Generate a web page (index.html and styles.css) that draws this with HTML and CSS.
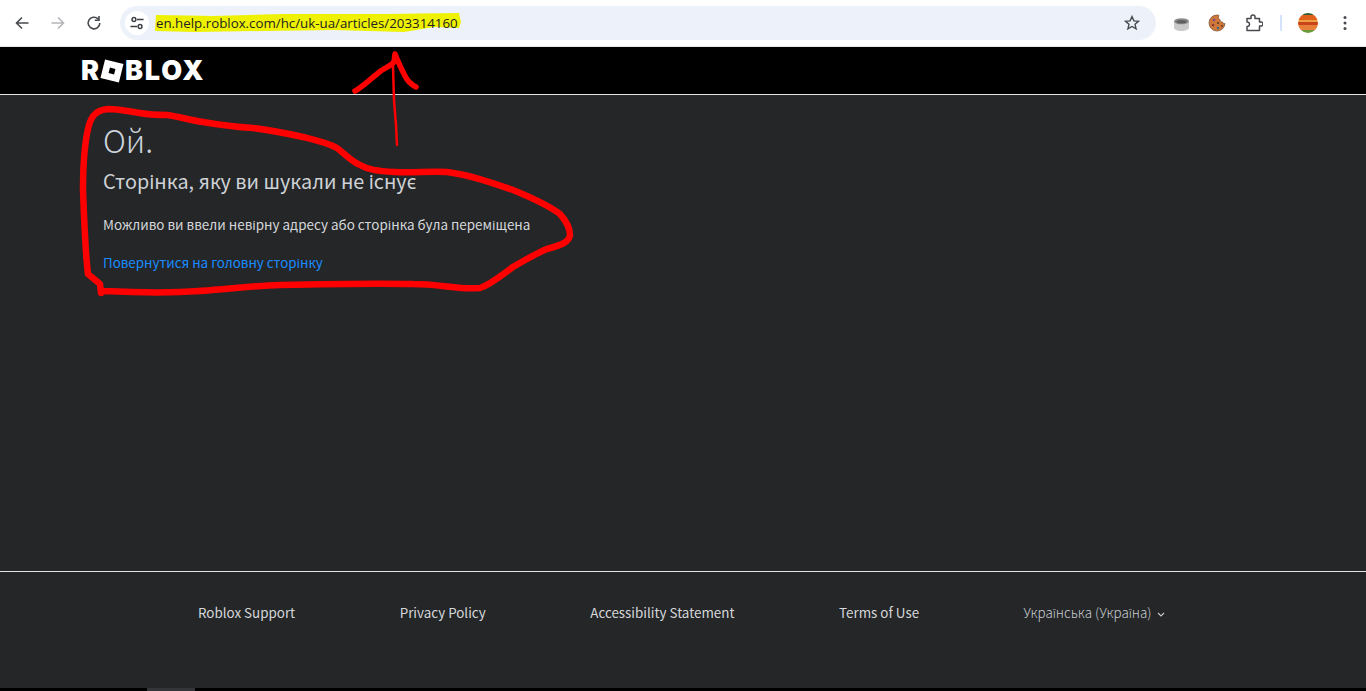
FILE: index.html
```html
<!DOCTYPE html>
<html lang="uk">
<head>
<meta charset="utf-8">
<title>Roblox</title>
<link rel="stylesheet" href="styles.css">
</head>
<body>
<div class="toolbar">
  <div class="nav">
    <svg class="tool-icon" viewBox="0 0 16 16"><path d="M14.500 8H2.500M8 2.500L2.500 8l5.500 5.500" fill="none" stroke="#474a4f" stroke-width="1.600"/></svg>
    <svg class="tool-icon" viewBox="0 0 16 16"><path d="M1.500 8h12M8 2.500L13.500 8 8 13.500" fill="none" stroke="#b4b6b9" stroke-width="1.600"/></svg>
    <svg class="tool-icon" viewBox="0 0 16 16"><path d="M13.800 8A5.800 5.800 0 1 1 12 3.800M13 1v4.200H8.800" fill="none" stroke="#474a4f" stroke-width="1.600"/></svg>
  </div>
  <div class="omnibox">
    <span class="site-chip">
      <svg class="chip-icon" viewBox="0 0 16 16"><circle cx="4.500" cy="4" r="2.200" fill="none" stroke="#3c3f44" stroke-width="1.700"/><path d="M8 4h7.500M.5 12H8" stroke="#3c3f44" stroke-width="1.700"/><circle cx="11.500" cy="12" r="2.200" fill="none" stroke="#3c3f44" stroke-width="1.700"/></svg>
    </span>
    <span class="url"><svg class="marker" viewBox="0 0 308 20" preserveAspectRatio="none"><path d="M2 2L60 3L130 1L230 1L305 0L307 9L305 15L280 14L250 19L180 17L110 18L40 19L1 18Z" fill="#eef200"/></svg><span class="url-text">en.help.roblox.com/hc/uk-ua/articles/203314160</span></span>
    <svg class="star" viewBox="0 0 16 16"><path d="M8 1.600l1.900 4.300 4.600.4-3.500 3 1.100 4.600L8 11.500l-4.100 2.400L5 9.300l-3.500-3 4.600-.4z" fill="none" stroke="#474a4f" stroke-width="1.400"/></svg>
  </div>
  <div class="extensions">
    <svg class="ext ext-cup" viewBox="0 0 18 14"><path d="M1 3.500v7c0 2 3.500 3.500 8 3.500s8-1.500 8-3.500v-7z" fill="#c9c9c9"/><ellipse cx="9" cy="3.500" rx="8" ry="3.300" fill="#8b8b8b"/><ellipse cx="9" cy="4" rx="5.500" ry="1.800" fill="#5f5f5f"/></svg>
    <svg class="ext ext-cookie" viewBox="0 0 18 18"><path d="M9 1a8 8 0 1 0 8 8.500c-1.200.5-2.300-.3-2.400-1.400-1.400.2-2.500-.9-2.400-2.300C10.800 5.800 9.800 3.200 11 1.500 10.400 1.200 9.700 1 9 1z" fill="#d0783a" stroke="#6e4a2c" stroke-width=".7"/><circle cx="6" cy="6" r="1.300" fill="#7a4a8c"/><circle cx="5" cy="11" r="1.300" fill="#8c3a3a"/><circle cx="10" cy="9" r="1.100" fill="#5a3a2a"/><circle cx="10" cy="14" r="1.200" fill="#3a6a8c"/><circle cx="14" cy="12" r="1" fill="#5a3a2a"/></svg>
    <svg class="ext ext-puzzle" viewBox="0 0 18 18"><path d="M2 4.500h4V3a2 2 0 0 1 4 0v1.500h4.500V8H16a2 2 0 0 1 0 4h-1.500v4.500H2V12.500c2 0 2.500-1 2.500-2.300S3.500 8 2 8z" fill="none" stroke="#474a4f" stroke-width="1.500" stroke-linejoin="round"/></svg>
    <span class="divider"></span>
    <span class="avatar"></span>
    <svg class="menu" viewBox="0 0 4 16"><circle cx="2" cy="2.500" r="1.500" fill="#474a4f"/><circle cx="2" cy="8" r="1.500" fill="#474a4f"/><circle cx="2" cy="13.500" r="1.500" fill="#474a4f"/></svg>
  </div>
</div>

<header class="site-header">
  <div class="logo"><span>R</span><span class="logo-o"></span><span>BLOX</span></div>
</header>

<main class="content">
  <h1 class="oops">Ой.</h1>
  <h2 class="subtitle">Сторінка, яку ви шукали не існує</h2>
  <p class="message">Можливо ви ввели невірну адресу або сторінка була переміщена</p>
  <a class="home-link" href="#">Повернутися на головну сторінку</a>
</main>

<footer class="site-footer">
  <a class="foot-link" href="#">Roblox Support</a>
  <a class="foot-link" href="#">Privacy Policy</a>
  <a class="foot-link" href="#">Accessibility Statement</a>
  <a class="foot-link" href="#">Terms of Use</a>
  <span class="language">Українська (Україна)<svg class="caret" viewBox="0 0 8 5"><path d="M1 1l3 3 3-3" fill="none" stroke="#c8ccd0" stroke-width="1.100"/></svg></span>
</footer>

<div class="taskbar"><span class="taskbar-tab"></span></div>

<svg class="ink" viewBox="0 0 1366 691">
  <path class="ink-wide" d="M101 293L100 284L88 274C85 250 84 215 83 190C83 165 85 140 89 125C92 115 97 110 108 109C120 109 130 112 140 113C150 115 158 115 167 115C180 117 190 120 203 122C220 125 235 127 253 128C270 130 285 133 303 137C315 140 328 143 337 148C346 155 350 160 358 164C368 170 378 171 395 172C412 173 430 171 447 172C470 175 490 182 513 190C530 197 548 205 560 214C567 222 570 228 570 235C569 242 562 245 547 249C535 254 525 260 513 267C503 274 492 284 480 288C460 290 440 284 413 284C370 283 325 284 280 285C245 286 215 291 180 292C155 293 125 292 103 291"/>
  <path class="ink-thin" d="M397 145L396 125L394 100L393 66"/>
  <path class="ink-head" d="M355 91C362 87 367 82 377 74C383 68 390 67 394 62L395 54C398 62 401 68 405 76C408 82 412 85 416 87"/>
</svg>
</body>
</html>
```
FILE: styles.css
```css
* { box-sizing: border-box; }
html, body { margin: 0; height: 691px; overflow: hidden; }
body {
  position: relative;
  display: flex;
  flex-direction: column;
  background: #242628;
  font-family: "Noto Sans CJK SC", "Noto Sans", sans-serif;
  color: #d5d7da;
}
.toolbar {
  height: 47px;
  flex: none;
  background: #fff;
  border-bottom: 1px solid #e4e6e9;
  display: flex;
  align-items: center;
  padding: 0 0 1px 6px;
}
.nav { display: flex; gap: 20px; width: 114px; padding-left: 8px; }
.tool-icon { width: 16px; height: 16px; }
.omnibox {
  width: 1036px;
  height: 34px;
  background: #edf2fa;
  border-radius: 17px;
  display: flex;
  align-items: center;
  padding: 0 16px 0 5px;
}
.site-chip {
  width: 24px;
  height: 24px;
  border-radius: 50%;
  background: #fff;
  display: flex;
  align-items: center;
  justify-content: center;
  margin-right: 7px;
}
.chip-icon { width: 14px; height: 14px; }
.url { position: relative; font-family: "Open Sans", sans-serif; font-size: 13.300px; color: #1f2124; }
.marker { position: absolute; left: -2px; top: -1px; width: 308px; height: 20px; }
.url-text { position: relative; }
.star { width: 16px; height: 16px; margin-left: auto; }
.extensions { display: flex; align-items: center; flex: 1; padding-left: 17px; }
.ext-cup { width: 17px; height: 13px; margin-top: 4px; }
.ext-cookie { width: 18px; height: 18px; margin-left: 18px; }
.ext-puzzle { width: 18px; height: 18px; margin-left: 19px; }
.divider { width: 2px; height: 16px; background: #d3e3fd; margin-left: 17px; }
.avatar {
  width: 20px;
  height: 20px;
  border-radius: 50%;
  margin-left: 16px;
  background: linear-gradient(#2c5a2c 0 10%, #e0601c 10% 36%, #f0a040 36% 44%, #c8441c 44% 60%, #e8803a 60% 84%, #6a9a3a 84%);
}
.menu { width: 4px; height: 16px; margin-left: 25px; }

.site-header {
  height: 48px;
  flex: none;
  background: #000;
  border-bottom: 1px solid #e3e4e6;
  padding-left: 81px;
  display: flex;
  align-items: center;
}
.logo {
  display: flex;
  align-items: center;
  font-family: Inter, sans-serif;
  font-weight: 900;
  font-size: 27px;
  line-height: 1;
  color: #fff;
  letter-spacing: 1.900px;
}
.logo-o {
  position: relative;
  width: 20px;
  height: 20px;
  margin: 0 3px 0 1px;
  background: #fff;
  transform: rotate(14deg) scale(.95);
}
.logo-o::after {
  content: "";
  position: absolute;
  left: 7px;
  top: 7px;
  width: 6px;
  height: 6px;
  background: #000;
}
.content {
  flex: 1;
  padding: 24px 0 0 103px;
  display: flex;
  flex-direction: column;
  align-items: flex-start;
  border-bottom: 1px solid #e3e4e6;
}
.oops { margin: 0; font-weight: 300; font-size: 31.500px; line-height: 40px; color: #cdd3da; }
.subtitle { margin: 9px 0 0; font-weight: 400; font-size: 19.800px; line-height: 26px; color: #cfd2d6; }
.message { margin: 20px 0 0; font-size: 13.450px; line-height: 20px; }
.home-link { margin-top: 18px; font-size: 13.400px; line-height: 20px; color: #1a8cff; text-decoration: none; }

.site-footer {
  height: 116px;
  flex: none;
  display: flex;
  align-items: flex-start;
  gap: 104.500px;
  padding: 30px 0 0 198px;
  font-size: 13.400px;
  line-height: 20px;
}
.foot-link { color: #d5d7da; text-decoration: none; }
.language { font-weight: 300; color: #c8ccd0; display: flex; align-items: center; }
.caret { width: 8px; height: 5px; margin: 4px 0 0 5px; }
.taskbar { height: 3px; flex: none; background: #000; padding-left: 147px; }
.taskbar-tab { display: block; width: 48px; height: 3px; background: #333539; }
.ink { position: absolute; left: 0; top: 0; width: 1366px; height: 691px; pointer-events: none; }
.ink path { fill: none; stroke: #f00; stroke-linecap: round; stroke-linejoin: round; }
.ink-wide { stroke-width: 6.500; }
.ink-thin { stroke-width: 2.500; }
.ink-head { stroke-width: 5.500; }
```
